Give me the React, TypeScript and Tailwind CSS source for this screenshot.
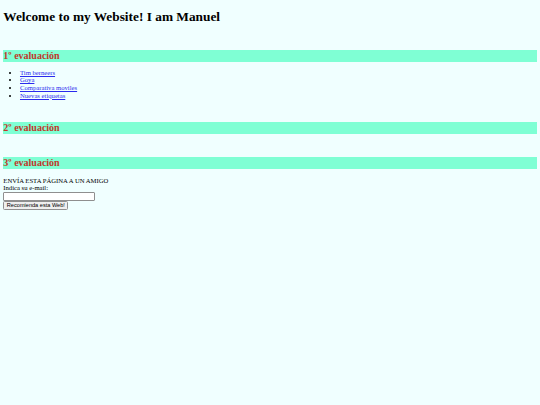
export default function App() {
  const links = ["Tim berneers", "Goya", "Comparativa moviles", "Nuevas etiquetas"];
  const h2 =
    "bg-[#7fffd4] text-[#c0392b] font-bold text-[10px] leading-[11.5px]";
  return (
    <div
      className="min-h-[405px] w-full bg-[#f0ffff] text-black px-[3.33px] pt-[9.3px] pb-4 text-[6.67px] leading-[7.67px]"
      style={{ fontFamily: '"Liberation Serif", "Times New Roman", serif' }}
    >
      <h1 className="font-bold text-[13.33px] leading-[15.3px]">
        Welcome to my Website! I am Manuel
      </h1>
      <h2 className={`${h2} mt-[25.7px]`}>1º evaluación</h2>
      <ul className="list-disc pl-[16.67px] mt-[7px]">
        {links.map((l) => (
          <li key={l}>
            <a href="#" className="text-[#2a2aee] underline">
              {l}
            </a>
          </li>
        ))}
      </ul>
      <h2 className={`${h2} mt-[23px]`}>2º evaluación</h2>
      <h2 className={`${h2} mt-[23.5px]`}>3º evaluación</h2>
      <div className="mt-[7.7px]">
        <div>ENVÍA ESTA PÁGINA A UN AMIGO</div>
        <div>Indica su e-mail:</div>
        <input
          type="text"
          className="block w-[92px] h-[8.5px] bg-white border border-[#8f8f8f] rounded-[1px] text-[6px] outline-none"
        />
        <button
          className="block mt-[0.5px] h-[8.5px] px-[2.5px] bg-[#efefef] border border-[#8f8f8f] rounded-[1.5px] text-[5.6px] leading-[6px] text-black"
          style={{ fontFamily: '"Liberation Sans", Arial, sans-serif' }}
        >
          Recomienda esta Web!
        </button>
      </div>
    </div>
  );
}
